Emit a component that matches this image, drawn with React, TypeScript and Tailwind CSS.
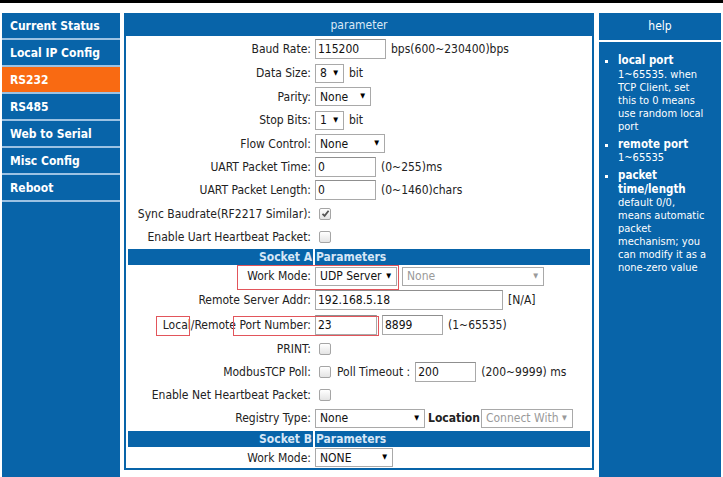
import React from "react"

const font = "[font-family:'DejaVu_Sans_Condensed','Liberation_Sans',sans-serif]"

function Arrow() {
  return <span className="text-[7px] leading-none text-black">▼</span>
}

function Select({ value, w, disabled }: { value: string; w: string; disabled?: boolean }) {
  return (
    <div
      className={`${w} h-[19px] border border-[#a9a9a9] bg-white flex items-center justify-between pl-[4px] pr-[5px] ${
        disabled ? "text-[#9a9a9a]" : "text-[#111]"
      }`}
    >
      <span>{value}</span>
      {disabled ? <span className="text-[7px] leading-none text-[#9a9a9a]">▼</span> : <Arrow />}
    </div>
  )
}

function Input({ value, w }: { value: string; w: string }) {
  return (
    <div className={`${w} h-[20px] border border-[#a9a9a9] border-t-[#8f8f8f] bg-white flex items-center pl-[2px] text-[#111]`}>
      {value}
    </div>
  )
}

function Check({ checked }: { checked?: boolean }) {
  return (
    <span className="ml-[4px] w-[12px] h-[12px] border border-[#a5a5a5] rounded-[2px] bg-gradient-to-b from-white to-[#e4e4e4] flex items-center justify-center">
      {checked && (
        <svg width="9" height="9" viewBox="0 0 9 9">
          <path d="M1.5 4.8 L3.6 6.8 L7.6 1.8" fill="none" stroke="#555" strokeWidth="1.8" />
        </svg>
      )}
    </span>
  )
}

function Row({ label, h, children }: { label: React.ReactNode; h: string; children?: React.ReactNode }) {
  return (
    <div className={`flex items-center ${h}`}>
      <div className="w-[185px] ml-[2px] text-right pr-[2px] text-[#222] whitespace-nowrap">{label}</div>
      <div className="ml-[2px] flex items-center gap-[5px] text-[#222] whitespace-nowrap">{children}</div>
    </div>
  )
}

function SectionBar({ left, right }: { left: string; right: string }) {
  return (
    <div className="mx-[2px] h-[16px] flex gap-[2px] text-[#d6e7f7] font-bold">
      <div className="w-[185px] bg-[#0864a9] text-right pr-[1px] leading-[16px]">{left}</div>
      <div className="flex-1 bg-[#0864a9] pl-[1px] leading-[16px]">{right}</div>
    </div>
  )
}

const menu = ["Current Status", "Local IP Config", "RS232", "RS485", "Web to Serial", "Misc Config", "Reboot"]

const help = [
  { title: ["local port"], body: ["1~65535. when", "TCP Client, set", "this to 0 means", "use random local", "port"] },
  { title: ["remote port"], body: ["1~65535"] },
  {
    title: ["packet", "time/length"],
    body: ["default 0/0,", "means automatic", "packet", "mechanism; you", "can modify it as a", "none-zero value"],
  },
]

export default function App() {
  return (
    <div className={`relative w-[723px] h-[477px] bg-white overflow-hidden text-[12px] ${font}`}>
      <div className="h-[3px] bg-black" />
      <div className="flex pt-[10px] h-[474px]">
        {/* left menu */}
        <div className="ml-[2px] w-[118px] h-full bg-[#0864a9] flex flex-col">
          {menu.map((m) => (
            <div
              key={m}
              className={`h-[27px] border-b-2 border-[#9cc2e3] pl-[8px] flex items-center text-white font-bold ${
                m === "RS232" ? "bg-[#f96a12]" : ""
              }`}
            >
              {m}
            </div>
          ))}
        </div>

        {/* parameter panel */}
        <div className="ml-[4px] w-[470px] h-[457px] border-2 border-[#0864a9] flex flex-col">
          <div className="h-[21px] bg-[#0864a9] text-[#dbe9f6] text-center leading-[20px]">parameter</div>
          <div className="h-[1px]" />
          <Row label="Baud Rate:" h="h-[24px]">
            <Input value="115200" w="w-[71px]" />
            <span>bps(600~230400)bps</span>
          </Row>
          <Row label="Data Size:" h="h-[24px]">
            <Select value="8" w="w-[29px]" />
            <span>bit</span>
          </Row>
          <Row label="Parity:" h="h-[23px]">
            <Select value="None" w="w-[56px]" />
          </Row>
          <Row label="Stop Bits:" h="h-[24px]">
            <Select value="1" w="w-[29px]" />
            <span>bit</span>
          </Row>
          <Row label="Flow Control:" h="h-[23px]">
            <Select value="None" w="w-[70px]" />
          </Row>
          <Row label="UART Packet Time:" h="h-[23px]">
            <Input value="0" w="w-[61px]" />
            <span>(0~255)ms</span>
          </Row>
          <Row label="UART Packet Length:" h="h-[24px]">
            <Input value="0" w="w-[61px]" />
            <span>(0~1460)chars</span>
          </Row>
          <Row label="Sync Baudrate(RF2217 Similar):" h="h-[23px]">
            <Check checked />
          </Row>
          <Row label="Enable Uart Heartbeat Packet:" h="h-[24px]">
            <Check />
          </Row>

          <SectionBar left="Socket A" right="Parameters" />

          <Row label="Work Mode:" h="h-[22px]">
            <Select value="UDP Server" w="w-[82px]" />
            <Select value="None" w="w-[142px]" disabled />
          </Row>
          <Row label="Remote Server Addr:" h="h-[25px]">
            <Input value="192.168.5.18" w="w-[188px]" />
            <span>[N/A]</span>
          </Row>
          <Row label="Local/Remote Port Number:" h="h-[25px]">
            <Input value="23" w="w-[62px]" />
            <Input value="8899" w="w-[61px]" />
            <span>(1~65535)</span>
          </Row>
          <Row label="PRINT:" h="h-[23px]">
            <Check />
          </Row>
          <Row label="ModbusTCP Poll:" h="h-[23px]">
            <Check />
            <span className="ml-[1px]">Poll Timeout :</span>
            <Input value="200" w="w-[61px]" />
            <span>(200~9999) ms</span>
          </Row>
          <Row label="Enable Net Heartbeat Packet:" h="h-[23px]">
            <Check />
          </Row>
          <Row label="Registry Type:" h="h-[24px]">
            <Select value="None" w="w-[110px]" />
            <span className="font-bold -ml-[2px]">Location</span>
            <div className="-ml-[4px]">
              <Select value="Connect With" w="w-[92px]" disabled />
            </div>
          </Row>
          <div className="h-[1px]" />
          <SectionBar left="Socket B" right="Parameters" />
          <Row label="Work Mode:" h="h-[21px]">
            <Select value="NONE" w="w-[78px]" />
          </Row>
        </div>

        {/* help panel */}
        <div className="ml-[5px] w-[122px] h-full flex flex-col">
          <div className="h-[27px] bg-[#0864a9] text-white text-center leading-[27px]">help</div>
          <div className="h-[2px]" />
          <div className="flex-1 bg-[#0864a9] pt-[12px] pl-[6px] pr-[1px] text-white">
            {help.map((h, i) => (
              <div key={h.title[0]} className={`flex ${i > 0 ? "mt-[5px]" : ""}`}>
                <span className="w-[13px] shrink-0 pt-[6px]">
                  <span className="block w-[3px] h-[3px] bg-white" />
                </span>
                <div>
                  {h.title.map((t) => (
                    <div key={t} className="font-bold text-[11.5px] leading-[13.5px] whitespace-nowrap">
                      {t}
                    </div>
                  ))}
                  {h.body.map((b) => (
                    <div key={b} className="text-[11px] leading-[13px] whitespace-nowrap">
                      {b}
                    </div>
                  ))}
                </div>
              </div>
            ))}
          </div>
        </div>
      </div>

      {/* red annotation boxes */}
      <div className="absolute left-[237px] top-[265px] w-[162px] h-[25px] border border-[#e2555b]" />
      <div className="absolute left-[156px] top-[316px] w-[34px] h-[20px] border border-[#e2555b]" />
      <div className="absolute left-[233px] top-[316px] w-[146px] h-[20px] border border-[#e2555b]" />
    </div>
  )
}
